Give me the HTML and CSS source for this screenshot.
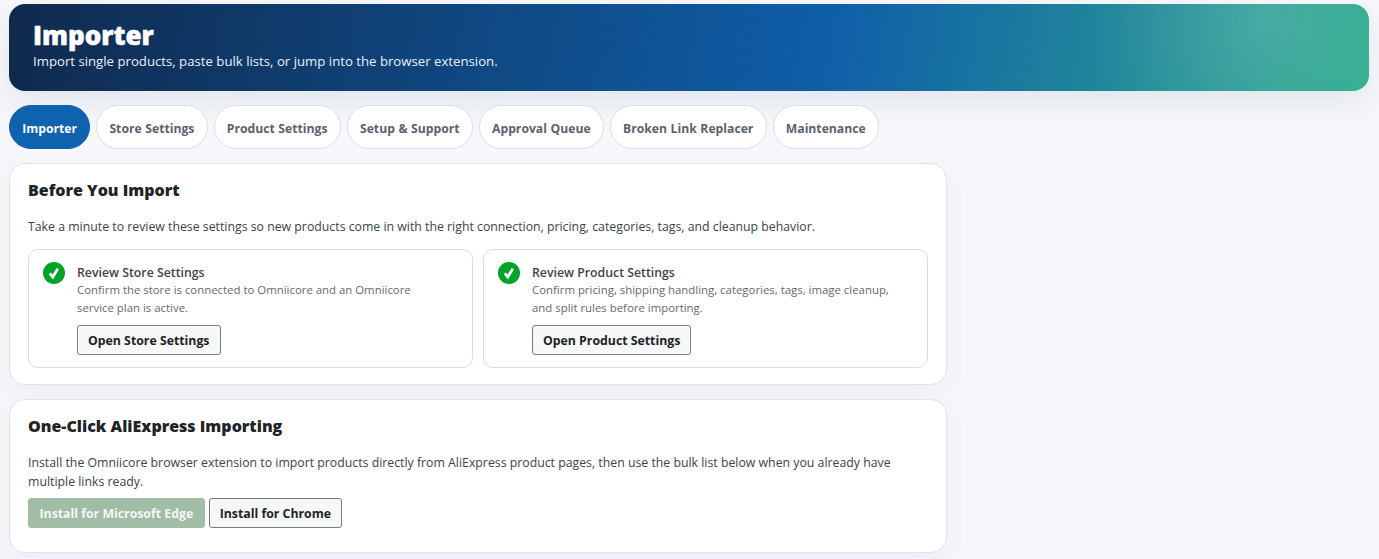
FILE: index.html
```html
<!DOCTYPE html>
<html lang="en">
<head>
    <meta charset="UTF-8">
    <title>Importer</title>
    <link rel="stylesheet" href="styles.css">
</head>
<body>
    <div class="hero">
        <h1>Importer</h1>
        <p>Import single products, paste bulk lists, or jump into the browser extension.</p>
    </div>
    <nav class="tabs">
        <a class="tab active">Importer</a>
        <a class="tab">Store Settings</a>
        <a class="tab">Product Settings</a>
        <a class="tab">Setup &amp; Support</a>
        <a class="tab">Approval Queue</a>
        <a class="tab">Broken Link Replacer</a>
        <a class="tab">Maintenance</a>
    </nav>
    <div class="content">
        <section class="card">
            <h2>Before You Import</h2>
            <p class="intro">Take a minute to review these settings so new products come in with the right connection, pricing, categories, tags, and cleanup behavior.</p>
            <div class="checks">
                <div class="check">
                    <svg class="check-icon" viewBox="0 0 22 22"><circle cx="11" cy="11" r="11" fill="#00a32a"/><path d="M6.8 11.4l3 3.6 5-8.4" fill="none" stroke="#fff" stroke-width="2.8"/></svg>
                    <div class="check-body">
                        <h3>Review Store Settings</h3>
                        <p>Confirm the store is connected to Omniicore and an Omniicore service plan is active.</p>
                        <button class="btn">Open Store Settings</button>
                    </div>
                </div>
                <div class="check">
                    <svg class="check-icon" viewBox="0 0 22 22"><circle cx="11" cy="11" r="11" fill="#00a32a"/><path d="M6.8 11.4l3 3.6 5-8.4" fill="none" stroke="#fff" stroke-width="2.8"/></svg>
                    <div class="check-body">
                        <h3>Review Product Settings</h3>
                        <p>Confirm pricing, shipping handling, categories, tags, image cleanup, and split rules before importing.</p>
                        <button class="btn">Open Product Settings</button>
                    </div>
                </div>
            </div>
        </section>
        <section class="card card-last">
            <h2>One-Click AliExpress Importing</h2>
            <p class="intro">Install the Omniicore browser extension to import products directly from AliExpress product pages, then use the bulk list below when you already have multiple links ready.</p>
            <div class="actions">
                <button class="btn btn-green">Install for Microsoft Edge</button>
                <button class="btn">Install for Chrome</button>
            </div>
        </section>
    </div>
</body>
</html>
```

FILE: styles.css
```css
body {
    margin: 0;
    padding: 4px 10px 0 9px;
    height: 559px;
    box-sizing: border-box;
    overflow: hidden;
    background: #f5f7fb;
    color: #1d2327;
    font-family: "Open Sans", "Noto Sans", sans-serif;
}
.hero {
    height: 87px;
    box-sizing: border-box;
    padding: 15px 24px 0;
    border-radius: 16px;
    color: #fff;
    background:
        radial-gradient(circle at 92% 15%, rgba(255, 255, 255, 0.14), transparent 170px),
        linear-gradient(100deg, #10294d 0%, #0f5ea8 60%, #31ad8e 100%);
    box-shadow: 0 12px 30px rgba(15, 23, 42, 0.08);
}
.hero h1 {
    margin: 0;
    font-size: 26px;
    line-height: 32px;
    font-weight: 800;
    -webkit-text-stroke: 0.5px #fff;
}
.hero p {
    margin: 0;
    font-size: 13.2px;
    line-height: 20px;
    color: #e8f0f8;
}
.tabs {
    display: flex;
    gap: 6px;
    margin: 14px 0;
}
.tab {
    height: 44px;
    box-sizing: border-box;
    padding: 2px 12.2px 0;
    display: flex;
    align-items: center;
    border: 1px solid #dcdfe6;
    border-radius: 22px;
    background: #fff;
    color: #5a6270;
    font-size: 12.2px;
    font-weight: 700;
    word-spacing: 0.4px;
}
.tab.active {
    background: #0f62ae;
    border-color: #0f62ae;
    color: #fff;
}
.content {
    width: 938px;
    display: flex;
    flex-direction: column;
    gap: 14px;
}
.card {
    box-sizing: border-box;
    padding: 14px 18px 16px;
    border: 1px solid #dfe3ea;
    border-radius: 16px;
    background: #fff;
    box-shadow: 0 8px 24px rgba(15, 23, 42, 0.04);
}
.card-last {
    padding-bottom: 24px;
}
.card h2 {
    margin: 0;
    font-size: 16px;
    line-height: 24px;
    font-weight: 800;
}
.intro {
    margin: 15px 0 0;
    font-size: 12.3px;
    line-height: 19px;
    color: #3c434a;
}
.checks {
    display: grid;
    grid-template-columns: 1fr 1fr;
    gap: 10px;
    margin-top: 13px;
}
.check {
    display: flex;
    gap: 12px;
    padding: 12px 14px;
    border: 1px solid #dcdcde;
    border-radius: 10px;
}
.check-icon {
    flex: none;
    width: 22px;
    height: 22px;
}
.check-body {
    padding-top: 2px;
}
.check-body h3 {
    margin: 0;
    font-size: 12.3px;
    line-height: 17px;
    font-weight: 600;
    color: #3c434a;
}
.check-body p {
    max-width: 362px;
    margin: 0;
    font-size: 11.4px;
    line-height: 18px;
    color: #646970;
}
.btn {
    height: 30px;
    padding: 0 10px;
    border: 1px solid #787c82;
    border-radius: 3px;
    background: #f6f7f7;
    color: #1d2327;
    font-family: inherit;
    font-size: 12.3px;
    font-weight: 700;
}
.check-body .btn {
    margin-top: 8px;
}
.actions {
    display: flex;
    gap: 4px;
    margin-top: 7px;
}
.btn-green {
    padding: 0 10.5px;
    background: #a1bda6;
    border-color: #a1bda6;
    color: #f4f8f4;
}
```
